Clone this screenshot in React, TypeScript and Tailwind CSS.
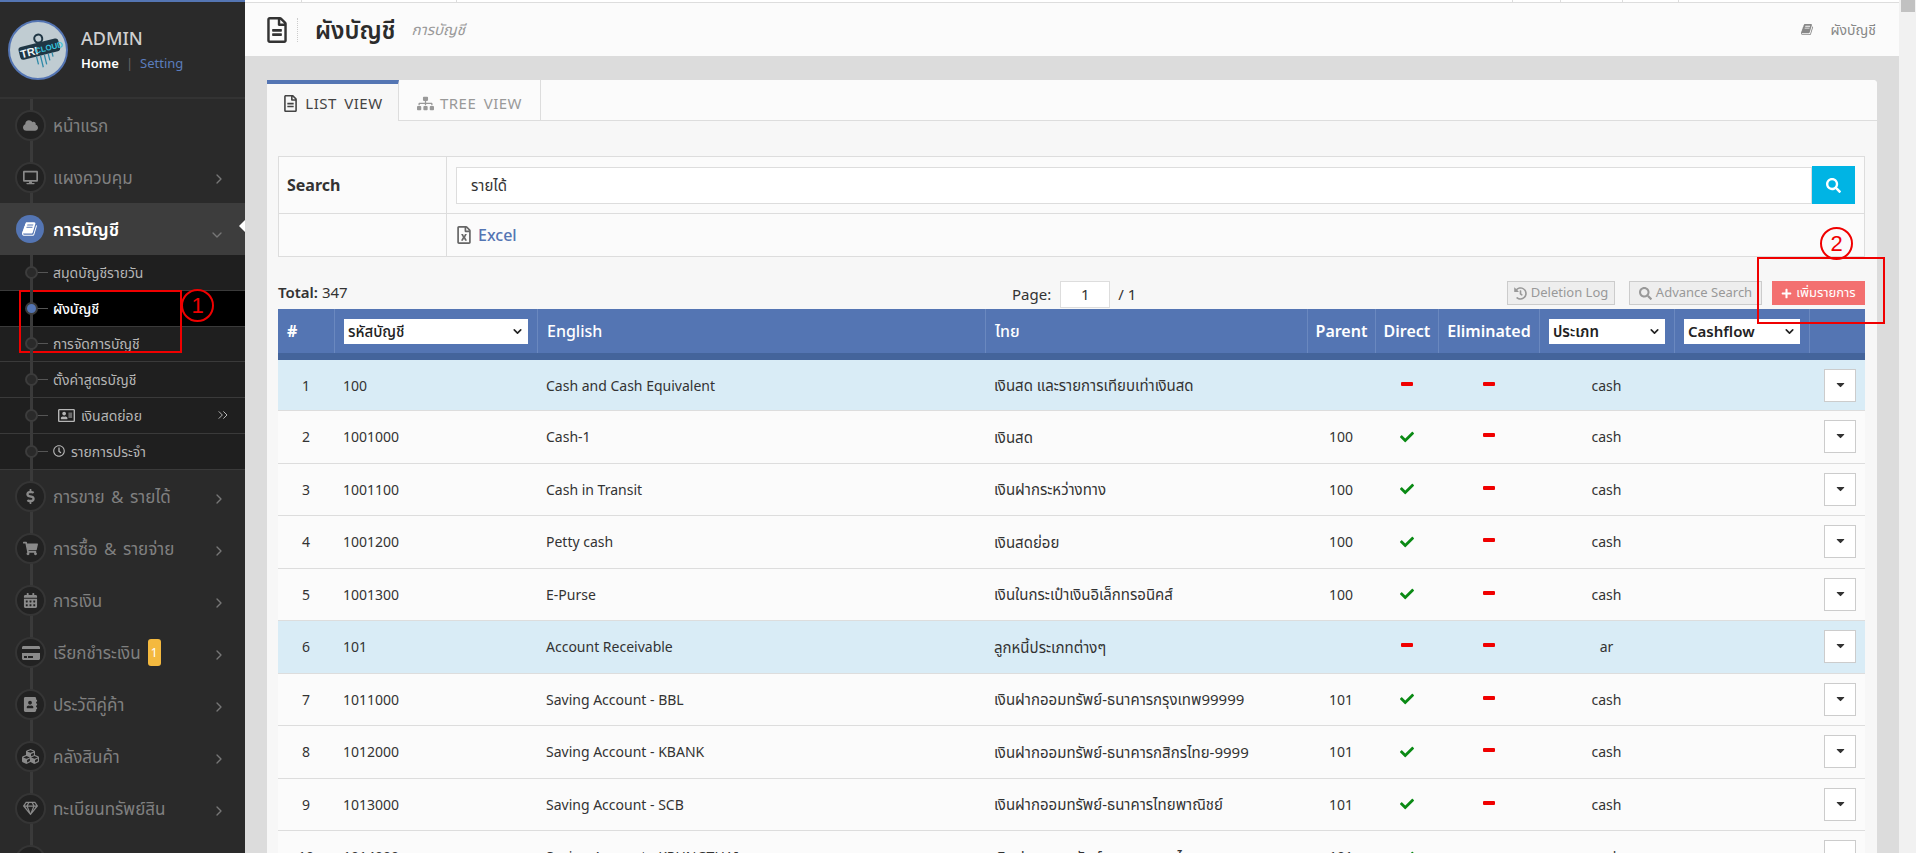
import type { ReactNode } from 'react';
import {
  FaAddressBook,
  FaCalendarAlt,
  FaCaretDown,
  FaCheck,
  FaCloud,
  FaCreditCard,
  FaCubes,
  FaDesktop,
  FaDollarSign,
  FaHistory,
  FaPlus,
  FaRegAddressCard,
  FaRegClock,
  FaRegFileAlt,
  FaRegFileExcel,
  FaRegGem,
  FaSearch,
  FaShoppingCart,
  FaSitemap,
} from 'react-icons/fa';
import { ChevronDown, ChevronRight, ChevronsRight } from 'lucide-react';

const fontStack = "font-['Noto_Sans','Noto_Sans_Thai','Open_Sans',sans-serif]";

const rows = [
  { n: 1, code: '100', en: 'Cash and Cash Equivalent', th: 'เงินสด และรายการเทียบเท่าเงินสด', parent: '', direct: false, type: 'cash', group: true },
  { n: 2, code: '1001000', en: 'Cash-1', th: 'เงินสด', parent: '100', direct: true, type: 'cash', group: false },
  { n: 3, code: '1001100', en: 'Cash in Transit', th: 'เงินฝากระหว่างทาง', parent: '100', direct: true, type: 'cash', group: false },
  { n: 4, code: '1001200', en: 'Petty cash', th: 'เงินสดย่อย', parent: '100', direct: true, type: 'cash', group: false },
  { n: 5, code: '1001300', en: 'E-Purse', th: 'เงินในกระเป๋าเงินอิเล็กทรอนิคส์', parent: '100', direct: true, type: 'cash', group: false },
  { n: 6, code: '101', en: 'Account Receivable', th: 'ลูกหนี้ประเภทต่างๆ', parent: '', direct: false, type: 'ar', group: true },
  { n: 7, code: '1011000', en: 'Saving Account - BBL', th: 'เงินฝากออมทรัพย์-ธนาคารกรุงเทพ99999', parent: '101', direct: true, type: 'cash', group: false },
  { n: 8, code: '1012000', en: 'Saving Account - KBANK', th: 'เงินฝากออมทรัพย์-ธนาคารกสิกรไทย-9999', parent: '101', direct: true, type: 'cash', group: false },
  { n: 9, code: '1013000', en: 'Saving Account - SCB', th: 'เงินฝากออมทรัพย์-ธนาคารไทยพาณิชย์', parent: '101', direct: true, type: 'cash', group: false },
  { n: 10, code: '1014000', en: 'Saving Account - KRUNGTHAI', th: 'เงินฝากออมทรัพย์-ธนาคารกรุงไทย', parent: '101', direct: true, type: 'cash', group: false },
];

const gridCols = 'grid grid-cols-[56px_203px_448px_322px_68px_63px_101px_135px_135px_56px]';

// slanted book, the older font awesome shape
const BookIcon = ({ className = '' }: { className?: string }) => (
  <svg viewBox="0 0 1792 1792" fill="currentColor" width="1em" height="1em" className={className}>
    <path d="M1639 478q40 57 18 129l-275 906q-19 64-76.5 107.5t-122.5 43.5h-923q-77 0-148.5-53.5t-99.5-131.5q-24-67-2-127 0-4 3-27t4-37q1-8-3-21.5t-3-19.5q2-11 8-21t16.5-23.5 16.5-23.5q23-38 45-91.5t30-91.5q3-10 .5-30t-.5-28q3-11 17-28t17-23q21-36 42-92t25-90q1-9-2.5-32t.5-28q4-13 22-30.5t22-22.5q19-26 42.5-84.5t27.5-96.5q1-8-3-25.5t-2-26.5q2-8 9-18t18-23 17-21q8-12 16.5-30.5t15-35 16-36 19.5-32 26.5-23.5 36-11.5 47.5 5.5l-1 3q38-9 51-9h761q74 0 114 56t18 130l-274 906q-36 119-71.5 153.5t-128.5 34.5h-869q-27 0-38 15-11 16-1 43 24 70 144 70h923q29 0 56-15.5t35-41.5l300-987q7-22 5-57 38 15 59 43zm-1064 2q-4 13 2 22.5t20 9.5h608q13 0 25.5-9.5t16.5-22.5l21-64q4-13-2-22.5t-20-9.5h-608q-13 0-25.5 9.5t-16.5 22.5zm-83 256q-4 13 2 22.5t20 9.5h608q13 0 25.5-9.5t16.5-22.5l21-64q4-13-2-22.5t-20-9.5h-608q-13 0-25.5 9.5t-16.5 22.5z" />
  </svg>
);

const MainItem = ({ icon, label, badge, arrow = true }: { icon: ReactNode; label: string; badge?: string; arrow?: boolean }) => (
  <div className="relative flex h-[52px] items-center">
    <div className="absolute left-[15px] z-10 flex h-[31px] w-[31px] items-center justify-center rounded-full border-2 border-[#353535] bg-[#222222] text-[15px] text-[#8a8a8a]">
      {icon}
    </div>
    <span className="ml-[53px] text-[17px] leading-none text-[#808080] [word-spacing:2px]">{label}</span>
    {badge && (
      <span className="ml-[7px] flex h-[27px] w-[13px] items-center justify-center rounded-[3px] bg-[#f4b93f] text-[12px] text-white">
        {badge}
      </span>
    )}
    {arrow && <ChevronRight size={16} className="absolute left-[211px] top-[20px] text-[#777777]" />}
  </div>
);

const SubItem = ({ label, active, children }: { label: string; active?: boolean; children?: ReactNode }) => (
  <div className={`relative flex h-[35.8px] items-center border-b border-[#3a3a3a] ${active ? 'bg-black' : 'bg-[#1f1f1f]'}`}>
    <span className={`absolute left-[25px] z-10 h-[13px] w-[13px] rounded-full border-2 border-[#3c3c3c] ${active ? 'bg-[#5475b3]' : 'bg-[#2a2a2a]'}`} />
    <span className="absolute left-[37px] h-px w-[11px] bg-[#555555]" />
    <span className={`ml-[53px] flex items-center gap-[6px] text-[14px] ${active ? 'font-medium text-white' : 'text-[#b5b5b5]'}`}>
      {children}
      {label}
    </span>
  </div>
);

const Sidebar = () => (
  <aside className="relative h-[853px] w-[245px] shrink-0 overflow-hidden border-t-2 border-[#5475b3] bg-[#2a2a2a]">
    <div className="flex h-[97px] items-center gap-[13px] border-b-2 border-[#333333] pl-2">
      <svg viewBox="0 0 60 60" className="h-[60px] w-[60px] shrink-0">
        <circle cx="30" cy="30" r="29" fill="#c0ccd2" stroke="#5475b3" strokeWidth="2" />
        <g transform="rotate(-14 30 30)">
          <circle cx="33" cy="19" r="4" fill="none" stroke="#1f3644" strokeWidth="2" />
          <rect x="11" y="23" width="41" height="13" rx="3" fill="#1f3644" />
          <path d="M27 36v8M31 36v12M35 36v10M39 36v7M43 36v4" stroke="#2f8aa8" strokeWidth="1.3" />
          <text x="12" y="34" fontSize="11" fontWeight="700" fill="#eef3f5" fontFamily="Liberation Sans">TRI</text>
          <text x="27" y="33" fontSize="8" fontWeight="700" fill="#37c3dd" fontFamily="Liberation Sans">CLOUD</text>
        </g>
      </svg>
      <div>
        <div className="text-[18px] font-medium leading-6 text-[#cfcfcf]">ADMIN</div>
        <div className="mt-1 flex items-center text-[13px] font-semibold">
          <span className="text-white">Home</span>
          <span className="mx-[7px] font-normal text-[#666666]">|</span>
          <span className="font-normal text-[#5b7dbd]">Setting</span>
        </div>
      </div>
    </div>

    <div className="relative">
      <span className="absolute bottom-0 left-[30px] top-0 z-0 w-[3px] bg-[#3a3a3a]" />
      <div className="relative">
        <MainItem icon={<FaCloud />} label="หน้าแรก" arrow={false} />
        <MainItem icon={<FaDesktop />} label="แผงควบคุม" />
        <div className="relative flex h-[52px] items-center bg-[#3d3d3d]">
          <div className="absolute left-4 z-10 flex h-7 w-7 items-center justify-center rounded-full bg-[#5475b3] text-[16px] text-white">
            <BookIcon />
          </div>
          <span className="ml-[53px] text-[18px] font-semibold text-white">การบัญชี</span>
          <ChevronDown size={16} className="absolute left-[209px] top-[24px] text-[#777777]" />
          <span className="absolute right-0 top-[17px] h-0 w-0 border-y-[6px] border-r-[6px] border-y-transparent border-r-white" />
        </div>
        <div className="relative pb-px">
          <span className="absolute bottom-0 left-[30px] top-0 z-[1] w-[3px] bg-[#3a3a3a]" />
          <SubItem label="สมุดบัญชีรายวัน" />
          <SubItem label="ผังบัญชี" active />
          <SubItem label="การจัดการบัญชี" />
          <SubItem label="ตั้งค่าสูตรบัญชี" />
          <SubItem label="เงินสดย่อย">
            <FaRegAddressCard className="ml-[5px] text-[17px]" />
          </SubItem>
          <SubItem label="รายการประจำ">
            <FaRegClock className="text-[12px]" />
          </SubItem>
          <ChevronsRight size={16} strokeWidth={1.5} className="absolute left-[215px] top-[152px] z-10 text-[#b5b5b5]" />
        </div>
        <MainItem icon={<FaDollarSign />} label="การขาย & รายได้" />
        <MainItem icon={<FaShoppingCart />} label="การซื้อ & รายจ่าย" />
        <MainItem icon={<FaCalendarAlt />} label="การเงิน" />
        <MainItem icon={<FaCreditCard className="text-[18px]" />} label="เรียกชำระเงิน" badge="1" />
        <MainItem icon={<FaAddressBook />} label="ประวัติคู่ค้า" />
        <MainItem icon={<FaCubes className="text-[17px]" />} label="คลังสินค้า" />
        <MainItem icon={<FaRegGem />} label="ทะเบียนทรัพย์สิน" />
        <MainItem icon={<BookIcon />} label="" arrow={false} />
      </div>
    </div>
  </aside>
);

const HeadCell = ({ children, center, className = '' }: { children: ReactNode; center?: boolean; className?: string }) => (
  <div className={`flex h-full items-center border-l border-[#6a88bf] first:border-l-0 ${center ? 'justify-center' : 'px-[9px]'} ${className}`}>
    {children}
  </div>
);

const HeadSelect = ({ label, bold }: { label: string; bold?: boolean }) => (
  <div className={`flex h-[25px] w-full items-center justify-between bg-white pl-1 pr-1 text-[15px] text-[#222222] ${bold ? 'font-semibold' : ''}`}>
    {label}
    <ChevronDown size={13} strokeWidth={3} />
  </div>
);

const Dash = () => <span className="-mt-[3px] h-1 w-3 rounded-[1px] bg-[#f00000]" />;

const Row = ({ r }: { r: (typeof rows)[number] }) => (
  <div className={`${gridCols} ${r.n === 1 ? 'h-[51px]' : 'h-[52.5px]'} items-center border-b border-[#dddddd] text-[14px] text-[#333333] ${r.group ? 'bg-[#d9ecf6]' : 'bg-[#fbfbfb]'}`}>
    <div className="text-center">{r.n}</div>
    <div className="pl-[9px]">{r.code}</div>
    <div className="pl-[9px]">{r.en}</div>
    <div className="pl-[9px] text-[15px]">{r.th}</div>
    <div className="text-center">{r.parent}</div>
    <div className="flex justify-center">
      {r.direct ? <FaCheck className="text-[14px] text-[#0a8a14]" /> : <Dash />}
    </div>
    <div className="flex justify-center">
      <Dash />
    </div>
    <div className="text-center">{r.type}</div>
    <div />
    <div className="flex justify-end pr-[9px]">
      <span className="flex h-[33px] w-8 items-center justify-center border border-[#cccccc] bg-white pb-[2px] text-[13px] text-[#333333]">
        <FaCaretDown />
      </span>
    </div>
  </div>
);

export default function App() {
  return (
    <div className={`relative flex h-[853px] w-[1916px] overflow-hidden bg-[#dcdcdc] ${fontStack}`}>
      <Sidebar />

      <main className="h-full w-[1654px] shrink-0">
        <div className="flex h-[3px] border-b border-[#dddddd] bg-white">
          <span className="w-[57px] border-r border-[#dddddd]" />
          <span className="w-[155px] border-r border-[#dddddd]" />
          <span className="w-[1056px] border-r border-[#dddddd]" />
          <span className="w-[48px] border-r border-[#dddddd]" />
          <span className="w-[62px] border-r border-[#dddddd]" />
          <span className="w-[56px] border-r border-[#dddddd]" />
        </div>
        <header className="flex h-[53px] items-center bg-[#fbfbfb] pl-[22px] pr-[23px]">
          <FaRegFileAlt className="-ml-[3px] text-[26px] text-[#333333]" />
          <span className="ml-[7px] h-[24px] border-l border-dotted border-[#cccccc]" />
          <h1 className="ml-[17px] text-[24px] font-semibold leading-none text-[#2c2c2c]">ผังบัญชี</h1>
          <span className="ml-4 text-[15px] italic text-[#999999]">การบัญชี</span>
          <div className="ml-auto flex items-center gap-[17px] text-[14px] text-[#888888]">
            <BookIcon className="text-[13px]" />
            ผังบัญชี
          </div>
        </header>

        <section className="mx-[22px] mt-6 rounded-t-[4px] bg-[#f7f7f7]">
          <div className="flex h-[41px] rounded-t-[4px] border-b border-[#dddddd] bg-[#fbfbfb]">
            <div className="-mb-px flex w-[132px] items-center justify-center gap-[6px] border-r border-t-4 border-[#dddddd] border-t-[#5475b3] bg-[#f7f7f7] pt-[2px] text-[15px] tracking-[0.5px] text-[#444444] [word-spacing:3px]">
              <FaRegFileAlt className="text-[17px]" />
              LIST VIEW
            </div>
            <div className="flex w-[142px] items-center justify-center gap-[6px] border-r border-[#dddddd] pt-[6px] text-[15px] tracking-[0.5px] text-[#999999] [word-spacing:3px]">
              <FaSitemap className="text-[17px]" />
              TREE VIEW
            </div>
          </div>

          <div className="pb-0 pl-[11px] pr-[12px] pt-[35px]">
            <div className="border border-[#dddddd] bg-[#fbfbfb]">
              <div className="flex h-[57px] border-b border-[#dddddd]">
                <div className="flex w-[168px] items-center border-r border-[#dddddd] pl-2 text-[16px] font-bold text-[#333333]">Search</div>
                <div className="flex flex-1 items-center px-[9px]">
                  <div className="flex h-[37px] flex-1 items-center border border-[#dddddd] bg-white pl-[14px] text-[15px] text-[#333333]">รายได้</div>
                  <div className="flex h-[38px] w-[43px] items-center justify-center bg-[#00b4e4] text-[15px] text-white">
                    <FaSearch />
                  </div>
                </div>
              </div>
              <div className="flex h-[42px]">
                <div className="w-[168px] border-r border-[#dddddd]" />
                <div className="flex items-center gap-[5px] pl-[8px] text-[16px] font-medium text-[#5475b3]">
                  <FaRegFileExcel className="text-[18px] text-[#666666]" />
                  Excel
                </div>
              </div>
            </div>

            <div className="relative mt-[24px] flex h-[28px] items-start text-[15px] text-[#333333]">
              <div className="leading-[22px]"><b className="font-semibold">Total:</b> 347</div>
              <div className="absolute left-[734px] flex items-center">
                <span>Page:</span>
                <span className="ml-[9px] flex h-[27px] w-[50px] items-center justify-center border border-[#dddddd] bg-white">1</span>
                <span className="ml-2">/ 1</span>
              </div>
              <div className="ml-auto flex items-center text-[13px]">
                <span className="flex h-6 w-[108px] items-center justify-center gap-1 border border-[#cccccc] bg-[#eeeeee] text-[#999999]"><FaHistory /> Deletion Log</span>
                <span className="ml-[14px] flex h-6 w-[133px] items-center justify-center gap-1 border border-[#cccccc] bg-[#eeeeee] text-[#999999]"><FaSearch /> Advance Search</span>
                <span className="ml-[10px] flex h-6 w-[93px] items-center justify-center gap-1 bg-[#f37070] text-white"><FaPlus className="text-[11px]" /> เพิ่มรายการ</span>
              </div>
            </div>

            <div className={`${gridCols} h-[51px] items-center border-b-[7px] border-[#44649b] bg-[#5475b3] text-[16px] font-medium text-white`}>
              <HeadCell><span className="font-bold">#</span></HeadCell>
              <HeadCell><HeadSelect label="รหัสบัญชี" /></HeadCell>
              <HeadCell>English</HeadCell>
              <HeadCell>ไทย</HeadCell>
              <HeadCell center><span className="font-semibold">Parent</span></HeadCell>
              <HeadCell center><span className="font-semibold">Direct</span></HeadCell>
              <HeadCell center><span className="font-semibold">Eliminated</span></HeadCell>
              <HeadCell><HeadSelect label="ประเภท" bold /></HeadCell>
              <HeadCell><HeadSelect label="Cashflow" bold /></HeadCell>
              <HeadCell>{null}</HeadCell>
            </div>
            {rows.map((r) => (
              <Row key={r.n} r={r} />
            ))}
          </div>
        </section>
      </main>

      <div className="h-full w-[17px] shrink-0 bg-[#f1f1f1]">
        <div className="mx-auto h-3 w-[14px] bg-[#c1c1c1]" />
      </div>

      {/* red annotations on the screenshot */}
      <div className="pointer-events-none absolute left-[19px] top-[290px] h-[63px] w-[163px] border-2 border-[#f00000]" />
      <div className="pointer-events-none absolute left-[181px] top-[289px] flex h-[33px] w-[33px] items-center justify-center rounded-full border-2 border-[#f00000] font-['Liberation_Sans',sans-serif] text-[22px] text-[#f00000]">1</div>
      <div className="pointer-events-none absolute left-[1757px] top-[257px] h-[67px] w-[128px] border-2 border-[#f00000]" />
      <div className="pointer-events-none absolute left-[1820px] top-[227px] flex h-[33px] w-[33px] items-center justify-center rounded-full border-2 border-[#f00000] font-['Liberation_Sans',sans-serif] text-[22px] text-[#f00000]">2</div>
    </div>
  );
}
